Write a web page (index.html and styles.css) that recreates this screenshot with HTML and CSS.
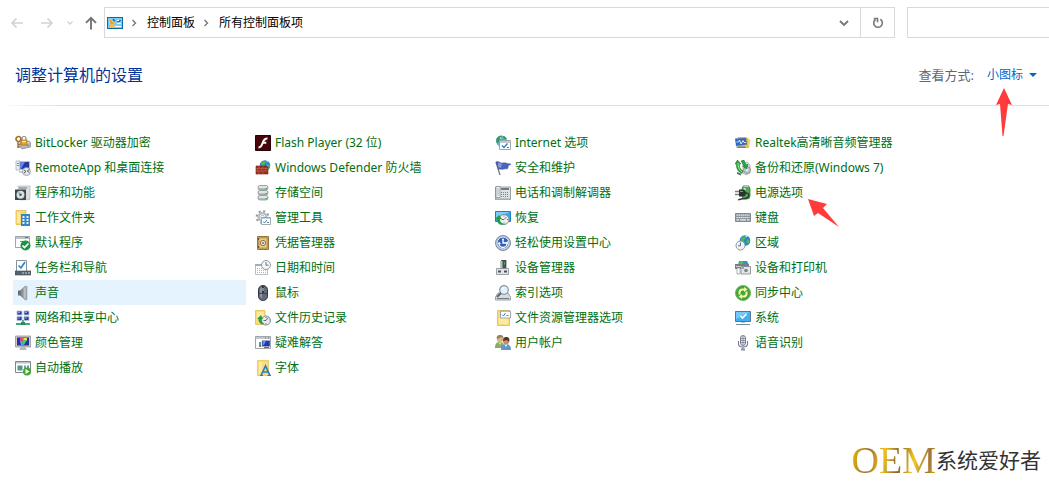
FILE: index.html
```html
<!DOCTYPE html>
<html lang="zh-CN">

<head>
    <meta charset="UTF-8">
    <meta name="viewport" content="width=device-width, initial-scale=1.0">
    <title>所有控制面板项</title>
    <link rel="stylesheet" href="styles.css">
</head>

<body>
    <nav class="toolbar">
        <button type="button" class="nav-btn" aria-label="后退" disabled>
            <svg width="14" height="14" viewBox="0 0 14 14"><path d="M13 7H2M6.500 2.500L2 7l4.500 4.500" fill="none" stroke="#d2d2d2" stroke-width="1.600"/></svg>
        </button>
        <button type="button" class="nav-btn" aria-label="前进" disabled>
            <svg width="14" height="14" viewBox="0 0 14 14"><path d="M1 7h11M7.500 2.500L12 7l-4.500 4.500" fill="none" stroke="#d2d2d2" stroke-width="1.600"/></svg>
        </button>
        <button type="button" class="nav-btn nav-recent" aria-label="最近浏览的位置" disabled>
            <svg width="6" height="6" viewBox="0 0 6 6"><path d="M.5 1.500L3 4l2.500-2.500" fill="none" stroke="#d2d2d2" stroke-width="1.300"/></svg>
        </button>
        <button type="button" class="nav-btn nav-up" aria-label="上移">
            <svg width="14" height="14" viewBox="0 0 14 14"><path d="M7 13.500V2M2 6.800L7 1.800l5 5" fill="none" stroke="#747474" stroke-width="1.900"/></svg>
        </button>
        <div class="address">
            <svg class="icon" viewBox="0 0 16 16"><path fill="#10679d" d="M0 2h16v12H0z"/><path fill="#79cdf7" d="M1 3h14v10H1z"/><circle cx="5" cy="7" r="2.800" fill="#fff"/><path fill="#f0a52a" d="M5 7V4.200A2.800 2.800 0 1 0 7.800 7z"/><path fill="#1978b5" d="M5.500 3.700a2.800 2.800 0 0 1 2.800 2.800H5.500z"/><path stroke="#fff" d="M10 5.500h4M10 8.500h4M7 11.500h7"/><path stroke="#1978b5" d="M12 5.500h2M10 6.500h3"/><path stroke="#f0c65a" d="M3 11.500h5"/></svg>
            <svg class="crumb-arrow" viewBox="0 0 6 8"><path d="M1.500 1l3 3-3 3" fill="none" stroke="#777" stroke-width="1.400"/></svg>
            <a class="crumb" href="#">控制面板</a>
            <svg class="crumb-arrow" viewBox="0 0 6 8"><path d="M1.500 1l3 3-3 3" fill="none" stroke="#777" stroke-width="1.400"/></svg>
            <a class="crumb" href="#">所有控制面板项</a>
            <button type="button" class="history-btn" aria-label="以前的位置">
                <svg width="10" height="8" viewBox="0 0 10 8"><path d="M1 2l4 4 4-4" fill="none" stroke="#777" stroke-width="1.900"/></svg>
            </button>
            <button type="button" class="refresh-btn" aria-label="刷新">
                <svg width="12" height="12" viewBox="0 0 12 12"><path d="M8.300 2.300A4.300 4.300 0 1 1 3.500 2.500M1.800 1.500h3.700v3.700" fill="none" stroke="#777" stroke-width="1.600"/></svg>
            </button>
        </div>
        <input type="search" class="search" aria-label="搜索控制面板">
    </nav>

    <header class="heading">
        <h1>调整计算机的设置</h1>
        <div class="view-by">
            <label for="view">查看方式:</label>
            <select id="view">
                <option>类别</option>
                <option>大图标</option>
                <option selected>小图标</option>
            </select>
            <svg class="caret" viewBox="0 0 8 4"><path fill="#0066cc" d="M0 0h8L4 4z"/></svg>
            <svg class="arrow-up" viewBox="0 0 18 48"><path fill="#ff3b3b" d="M9 0l8 17-4-1-4.500 32h-1L5 16l-4 1z"/></svg>
        </div>
    </header>

    <main>
        <ul class="items">
            <li><a href="#">
                <svg class="icon" viewBox="0 0 16 16"><path fill="#b4b9be" stroke="#737a80" stroke-width=".6" d="M5 7l9-1 1.500 1.500V12L7 14l-2-2z"/><path fill="#e3e6e8" d="M6 8l8-1 .8 1L7 9.500z"/><circle cx="13" cy="10.500" r=".8" fill="#35a73b"/><circle cx="3.500" cy="4" r="2.500" fill="none" stroke="#a3752c" stroke-width="1.700"/><path stroke="#a3752c" stroke-width="1.500" d="M3 6v7M3 9.500h2M3 12h2"/><path d="M7 5V3.500a2 2 0 0 1 4 0V5" fill="none" stroke="#888" stroke-width="1.200"/><path fill="#e1aa37" stroke="#99651c" stroke-width=".6" d="M6 5h6v5H6z"/><path fill="#fff0a6" d="M7 6h4v1H7z"/></svg>
                <span>BitLocker 驱动器加密</span></a></li>
            <li><a href="#">
                <svg class="icon" viewBox="0 0 16 16"><path fill="#470508" stroke="#270305" d="M.5.500h15v15H.5z"/><path d="M12.500 3.500C8.500 3.300 8 7 7 9.500c-.7 1.900-1.700 2.900-3.500 2.900M7.800 7.700h3.500" fill="none" stroke="#fff" stroke-width="2"/></svg>
                <span>Flash Player (32 位)</span></a></li>
            <li><a href="#">
                <svg class="icon" viewBox="0 0 16 16"><circle cx="6.500" cy="6" r="5.500" fill="#53aee2"/><path fill="#3c9b43" d="M2 3c2-2.500 4-2.500 5-2l-1 3-2 1v2L2 8C.8 6 1 4.500 2 3zM8 1c2 0 3.500 2 3.800 3L9 4z"/><path fill="#d9f2fc" d="M5 2l2 1-2 1z"/><path fill="#fff" stroke="#8c949b" stroke-width=".8" d="M4.500 5.500h11v9h-11z"/><path fill="#c3cbd0" d="M5 6h10v2H5z"/><path d="M7 10.500l2 2 3.500-4" fill="none" stroke="#287dc5" stroke-width="1.300"/><path stroke="#777" d="M12 12.500h2"/></svg>
                <span>Internet 选项</span></a></li>
            <li><a href="#">
                <svg class="icon" viewBox="0 0 16 16"><path fill="#e9b53c" d="M3 2h8l4 3-1 8-11-1z"/><path fill="#3567bd" d="M0 3.500L11 3l1 6.500-11 1.500z"/><path d="M1.500 7h2l1-2 1.500 4L8 5.500 9 7.500h2" fill="none" stroke="#dcf3ff" stroke-width=".9"/><path fill="#5c82bf" d="M1 11.500h10v1.500H2z"/><ellipse cx="12" cy="11.500" rx="1.800" ry="1.300" fill="#eac254"/><path d="M13.500 11V4l2 2.500" fill="none" stroke="#f6d66d" stroke-width="1.200"/></svg>
                <span>Realtek高清晰音频管理器</span></a></li>

            <li><a href="#">
                <svg class="icon" viewBox="0 0 16 16"><path fill="#eef1f5" stroke="#a8adb8" stroke-width=".8" d="M1 1h4v9H1z"/><path stroke="#888" d="M2 3.500h2M2 5.500h2"/><path fill="#2738a2" stroke="#bdc3cd" d="M4.500 1.500h10v8h-10z"/><path fill="#6685dc" d="M5 2h5L6 9H5z"/><path fill="#c7cdd3" d="M4 11h6v2H4z"/><circle cx="11.500" cy="11.500" r="4" fill="#e6eaed" stroke="#81888e" stroke-width=".7"/><path d="M9 10l2 1.500L9 13m5.300-3.500l-2 1.500 2 1.500" fill="none" stroke="#46555f"/></svg>
                <span>RemoteApp 和桌面连接</span></a></li>
            <li><a href="#">
                <svg class="icon" viewBox="0 0 16 16"><circle cx="10" cy="5.500" r="5.300" fill="#2587d2"/><path fill="#55b654" d="M8 1l3 1-1 2-3 2-1-3zm4 3l3 1-1 4-3-1z"/><path fill="#c5e8fa" d="M11 0l2 1.500-1 1z"/><path fill="#9c3024" stroke="#752016" stroke-width=".6" d="M1 6h10l2 1v7H1z"/><path stroke="#c5705c" stroke-width=".5" d="M1 8.500h12M1 11h12M4 6v2.500m4-2.500v2.500M2.500 8.500V11m4-2.500V11m4-2.500V11M4 11v3m4-3v3"/></svg>
                <span>Windows Defender 防火墙</span></a></li>
            <li><a href="#">
                <svg class="icon" viewBox="0 0 16 16"><path stroke="#77777f" stroke-width="1.300" d="M1 2l4 13"/><path fill="#4d63ba" stroke="#3448a0" stroke-width=".5" d="M1 2c3-1.500 4 2 7 1 2-1 4 1 8 1-2 1-3 2-3 3.500 0 2-2 1-4 1.500C6 9.800 6 9 3.500 9z"/><path fill="#8396df" d="M3 3c2-1 3 1 4 1L6 8 3 7z"/></svg>
                <span>安全和维护</span></a></li>
            <li><a href="#">
                <svg class="icon" viewBox="0 0 16 16"><path fill="#e1e5e9" stroke="#8e959b" stroke-width=".6" d="M8 4l4-2 3 3v8l-4 2-3-2z"/><circle cx="12" cy="10" r="3.500" fill="#c0c6cc" stroke="#767e85" stroke-width=".7"/><circle cx="12" cy="10" r="1" fill="#fff"/><path fill="#27a63c" stroke="#176c25" stroke-width=".5" d="M0 4l2.500-4L6 4H4.500c-.5 3 .5 5 3.500 7l-1 2.500C3 12 1 8 1.500 4zM6 1l3-1 2 5 2-1-1.500 5L7.500 6H9z"/><path d="M3 3c0 4 1 7 4 9" fill="none" stroke="#9fee8a"/><path fill="#666e73" d="M2 12l4 1.500v2L2 14z"/></svg>
                <span>备份和还原(Windows 7)</span></a></li>

            <li><a href="#">
                <svg class="icon" viewBox="0 0 16 16"><path fill="#dbdfe2" stroke="#a8adb0" stroke-width=".6" d="M3 1h12v13.500L5 15z"/><path fill="#a5abb0" d="M4 2h8v2H4z"/><path fill="#3f474c" d="M0 4.500h11V15H0z"/><circle cx="5.500" cy="9.700" r="4" fill="#d9dfe3"/><path fill="#98bdcf" d="M5.500 9.700l-3.300-2 2.300-1.600z"/><circle cx="5.500" cy="9.700" r="1.200" fill="#444d52"/></svg>
                <span>程序和功能</span></a></li>
            <li><a href="#">
                <svg class="icon" viewBox="0 0 16 16"><g fill="#b9bec2" stroke="#84898d" stroke-width=".7"><rect x="3" y=".5" width="10" height="4.500" rx="2"/><rect x="3" y="5.500" width="10" height="4.500" rx="2"/><rect x="3" y="10.500" width="10" height="4.500" rx="2"/></g><path stroke="#eef0f1" stroke-width="1.300" d="M4 2h8m-8 5h8m-8 5h8"/><path stroke="#38b64a" stroke-width="1.200" d="M10.500 3.700h1.500m-1.500 5h1.500m-1.500 5h1.500"/></svg>
                <span>存储空间</span></a></li>
            <li><a href="#">
                <svg class="icon" viewBox="0 0 16 16"><path fill="#dce2e6" stroke="#838d94" stroke-width=".8" d="M.5 2h15v12H.5z"/><path fill="#f6f8f9" stroke="#7b858b" stroke-width=".7" d="M1 1.500h4v11H1z"/><path fill="#6f7b82" d="M6 3h8v2H6z"/><path stroke="#76838b" stroke-dasharray="1 1" d="M6 7.500h8m-8 2h8m-8 2h8"/><path stroke="#a5adb2" d="M0 14.500h16M3 3v8"/></svg>
                <span>电话和调制解调器</span></a></li>
            <li class="marked"><a href="#">
                <svg class="icon" viewBox="0 0 16 16"><rect x="7" y="1" width="8" height="13" rx="3" fill="#4bae4b" stroke="#2e742f" stroke-width=".8"/><path fill="#c9f3c0" d="M8.500 3h2v4h-2z"/><path fill="#d1d5d2" stroke="#8b928c" stroke-width=".5" d="M8.500.300h5V2h-5z"/><path fill="#2c3334" d="M4 4.500h4c4 0 4 7 0 7H4z"/><path stroke="#777f81" stroke-width="1.300" d="M0 6.500h4M0 9.500h4"/><path d="M10 8c6-.5 4 5 0 5.500-4 .5-4 0-7 1.500" fill="none" stroke="#333" stroke-width="1.300"/><path stroke="#8b9293" d="M5 6.500h3"/></svg>
                <span>电源选项</span></a>
                <svg class="arrow-left" viewBox="0 0 32 30"><path fill="#ff3b3b" d="M0 0l19 5-4 4 16 19-21-14-4 3z"/></svg></li>

            <li><a href="#">
                <svg class="icon" viewBox="0 0 16 16"><path fill="#f7d779" stroke="#e6bb49" stroke-width=".8" d="M1 .5h10v14H1z"/><path fill="#ffe9a2" d="M2 2h3v11H2z"/><path fill="#3487c7" d="M6 4h9v12H6z"/><path fill="#e3f3fc" d="M7.500 6h2v2h-2zm4 0h2v2h-2zm-4 3h2v2h-2zm4 0h2v2h-2zm-4 3h2v2h-2zm4 0h2v2h-2z"/></svg>
                <span>工作文件夹</span></a></li>
            <li><a href="#">
                <svg class="icon" viewBox="0 0 16 16"><circle cx="7.500" cy="7" r="5.800" fill="none" stroke="#8d969d" stroke-width="2.200" stroke-dasharray="2 2.555"/><circle cx="7.500" cy="7" r="3.900" fill="#fff" stroke="#b4bcc1" stroke-width="2.200"/><circle cx="7.500" cy="7" r="1.800" fill="#fff" stroke="#87919a" stroke-width=".6"/><path fill="#fff" stroke="#8c959c" stroke-width=".8" d="M6.500 7.500h9v7h-9z"/><path fill="#c5cdd3" d="M7 8h8v1H7z"/><path d="M8 11.500l1.500 1.500 2.500-3" fill="none" stroke="#2784cf"/><path stroke="#777" d="M12 12.500h2"/></svg>
                <span>管理工具</span></a></li>
            <li><a href="#">
                <svg class="icon" viewBox="0 0 16 16"><path fill="#36a6ed" stroke="#1880c3" d="M.5 1.500h15v10H.5z"/><path fill="#79cffa" d="M1 2h14L1 8z"/><circle cx="9" cy="9.500" r="5" fill="#edf1ef" stroke="#7d8787"/><path d="M9 9.500L11.500 7M9 9.500H6.500M9 5.500v1m4 3h-1m-3 3v1" fill="none" stroke="#616b6b"/><path fill="#239c43" d="M0 9l4-4 3 4H5c0 3 1 4 4 5-3 2-7 0-7-5z"/></svg>
                <span>恢复</span></a></li>
            <li><a href="#">
                <svg class="icon" viewBox="0 0 16 16"><path fill="#8b959c" stroke="#818b92" d="M.5 3.500h15v8H.5z"/><path stroke="#eef1f3" stroke-width="1.200" stroke-dasharray="1.400 .6" d="M1.500 5.200h13m-13 2.300h13"/><path stroke="#eef1f3" stroke-width="1.200" d="M1.500 9.800H4m1 0h6m1 0h2.500"/></svg>
                <span>键盘</span></a></li>

            <li><a href="#">
                <svg class="icon" viewBox="0 0 16 16"><path fill="#fff" stroke="#848d94" stroke-width=".8" d="M.5 1.500h14v11H.5z"/><path fill="#bdc5cb" d="M1 2h13v2H1z"/><path stroke="#687279" d="M10 2.500h3"/><path fill="#459cd9" d="M5 6h3v1H5z"/><circle cx="10.500" cy="10.500" r="5" fill="#1c9345"/><path d="M7.500 10.500l2 2 4-4" fill="none" stroke="#fff" stroke-width="1.700"/></svg>
                <span>默认程序</span></a></li>
            <li><a href="#">
                <svg class="icon" viewBox="0 0 16 16"><path fill="#c9a557" stroke="#98773a" d="M2.500 1.500h11v13h-11z"/><path fill="#ebd08c" stroke="#a9854a" stroke-width=".7" d="M4 3h8v10H4z"/><circle cx="8" cy="8" r="2.700" fill="#e8e1cb" stroke="#8f794f"/><circle cx="8" cy="8" r="1" fill="#7e745e"/><path stroke="#704f1b" d="M3.500 3v2m0 6v2"/></svg>
                <span>凭据管理器</span></a></li>
            <li><a href="#">
                <svg class="icon" viewBox="0 0 16 16"><circle cx="8" cy="8" r="7.500" fill="#b4bcc6" stroke="#848c98"/><circle cx="8" cy="8" r="5.900" fill="#2f60bd" stroke="#eef4ff" stroke-width=".8"/><path d="M4 8.500a4 4 0 0 0 8 0M8 4v4h3" fill="none" stroke="#fff" stroke-width="1.400"/><path fill="#fff" d="M3 9l1-2.500L6 9zm7-1l3-2-.3 3.500zM7 5l1-2 1 2z"/></svg>
                <span>轻松使用设置中心</span></a></li>
            <li><a href="#">
                <svg class="icon" viewBox="0 0 16 16"><circle cx="10" cy="5.500" r="5.300" fill="#2584ce"/><path fill="#54b453" d="M6 3l3-2 2 2-2 2v2H6zm6 1l3 1-2 4-2-2z"/><path fill="#bfe8fa" d="M10 .5l3 1-2 1z"/><circle cx="5.500" cy="10.500" r="4.500" fill="#f1f4f6" stroke="#8b969d"/><path d="M5.500 7.500v3.200H3" fill="none" stroke="#68747b"/></svg>
                <span>区域</span></a></li>

            <li><a href="#">
                <svg class="icon" viewBox="0 0 16 16"><path fill="#fff" stroke="#8a9299" d="M1.500.5h10v11h-10z"/><path d="M3.500 5.500L6 8l4-6" fill="none" stroke="#2688d7" stroke-width="1.700"/><path fill="#58636d" stroke="#414c56" stroke-width=".6" d="M0 11h16v4H0z"/><path fill="#ccd4d9" d="M7 12.500h2v1H7zm3 0h2v1h-2zm3 0h2v1h-2z"/></svg>
                <span>任务栏和导航</span></a></li>
            <li><a href="#">
                <svg class="icon" viewBox="0 0 16 16"><path fill="#fff" stroke="#a2adb3" stroke-width=".8" d="M.5 4.500h12v10H.5z"/><path fill="#a2afb7" d="M0 4h12v2H0z"/><path stroke="#8fc3d4" stroke-dasharray="1 1" d="M2 8.500h9m-9 2h9m-9 2h9"/><circle cx="11" cy="5" r="4.500" fill="#f5f7f7" stroke="#8d999f"/><path d="M11 2v3.200h2.500" fill="none" stroke="#66757b"/></svg>
                <span>日期和时间</span></a></li>
            <li><a href="#">
                <svg class="icon" viewBox="0 0 16 16"><path fill="#4a5257" stroke="#3d454a" stroke-width=".7" d="M6.500 0h4.500v9H6.500z"/><path fill="#bcc3c7" d="M5 1h2.500v7H5z"/><path fill="#42d14c" d="M9 2.500h1v2H9z"/><path fill="#e2e5e7" stroke="#858b8f" stroke-width=".8" d="M1.500 8.500h12v6h-12z"/><path fill="#4b5357" d="M3 10.500h3v2H3zm6 0h3v2H9z"/></svg>
                <span>设备管理器</span></a></li>
            <li><a href="#">
                <svg class="icon" viewBox="0 0 16 16"><path fill="#2998d2" d="M4 1h8l2 4H3z"/><path fill="#58b96a" d="M5 1h3v3H4z"/><path fill="#777f84" d="M0 4h14v5H0z"/><path stroke="#d2d7d9" d="M1 6.500h8"/><path fill="#fff" stroke="#888f93" stroke-width=".7" d="M2 8h3v6H2z"/><path fill="#e4e7e9" stroke="#7e878c" stroke-width=".8" d="M6 6.500h9.500v7.500H6z"/><circle cx="11" cy="10.500" r="2.300" fill="#7d888e" stroke="#fff" stroke-width=".7"/><path fill="#535e64" d="M7 7.500h2v1H7z"/></svg>
                <span>设备和打印机</span></a></li>

            <li><a href="#" class="hover">
                <svg class="icon" viewBox="0 0 16 16"><path fill="#686f74" d="M3 5.500h3v5H3z"/><path fill="#8a9196" stroke="#697176" stroke-width=".6" d="M5.500 5.500l5-4.500v14l-5-4.500z"/><path fill="#bcc2c6" d="M8.500 3.500L11 1v14l-2.500-2.500z"/><path stroke="#9aa4aa" stroke-width="1.600" d="M11.500 1v14"/></svg>
                <span>声音</span></a></li>
            <li><a href="#">
                <svg class="icon" viewBox="0 0 16 16"><rect x="3.500" y=".5" width="9" height="15" rx="4.300" fill="#626b76" stroke="#303741"/><path fill="#87929f" d="M5 5c0-2 1-3 2-3v6H5z"/><path fill="#303a48" d="M7 1h2v7H7z"/><path stroke="#cad5df" d="M8 3v3"/><path d="M4 8.500h8" fill="none" stroke="#3b4552"/><path fill="#909aa5" d="M5 9h2v4c-1 0-2-1-2-4z"/></svg>
                <span>鼠标</span></a></li>
            <li><a href="#">
                <svg class="icon" viewBox="0 0 16 16"><path fill="#d8dcdf" stroke="#848d94" stroke-width=".8" d="M3 8h10l2.500 4v3H.5v-3z"/><path stroke="#737c83" d="M2 13.500h12"/><circle cx="9" cy="5" r="4.300" fill="#e2f2fb" stroke="#8796a2" stroke-width="1.200"/><path fill="#fff" d="M7 3l3-1-2 3z"/><path stroke="#5a656d" stroke-width="1.800" d="M6 8l-4 4"/></svg>
                <span>索引选项</span></a></li>
            <li><a href="#">
                <svg class="icon" viewBox="0 0 16 16"><circle cx="8" cy="8" r="7.500" fill="#43a536" stroke="#6bb95f"/><path d="M4.500 9.500V7a3 3 0 0 1 3-2.500H9M11.500 6.500V9a3 3 0 0 1-3 2.500H7" fill="none" stroke="#fff4ac" stroke-width="2"/><path fill="#fff4ac" d="M9 2l3.500 2.500L9 7zm-2 7v5l-3.500-2.500z"/></svg>
                <span>同步中心</span></a></li>

            <li><a href="#">
                <svg class="icon" viewBox="0 0 16 16"><g fill="#293c9b" stroke="#bbc3dc" stroke-width=".9"><path d="M2 1h5v4H2zM9 1h5v4H9zM2 6.500h5v4H2zM9 6.500h5v4H9z"/></g><path fill="#849df0" d="M3 2h2v1H3zm7 0h2v1h-2zM3 7.500h2v1H3zm7 0h2v1h-2z"/><path stroke="#39a777" stroke-width="1.700" d="M8 10v4"/><path fill="#37ad7b" d="M1 13h14v2H1z"/><path fill="#2e895f" d="M6 12h4v3H6z"/></svg>
                <span>网络和共享中心</span></a></li>
            <li><a href="#">
                <svg class="icon" viewBox="0 0 16 16"><path fill="#f8db7c" stroke="#e1bc54" stroke-width=".8" d="M.5.500H10v14H.5z"/><path fill="#ffe9a0" d="M2 2h7v8H2z"/><circle cx="11" cy="10.500" r="4.500" fill="#e8ecee" stroke="#818b91"/><path d="M11 10.500l2-3m-2 3H8.500" fill="none" stroke="#626e75"/><path stroke="#828d94" d="M11 7v1m3 2h1m-4 3v1"/><path fill="#249c42" d="M2 9l4-4 2 4H6.500c0 3 1 4 3 5-3 1-6-1-6-5z"/></svg>
                <span>文件历史记录</span></a></li>
            <li><a href="#">
                <svg class="icon" viewBox="0 0 16 16"><path fill="#f8db7c" stroke="#dfb94f" stroke-width=".8" d="M2.500.5h12v15h-12z"/><path fill="#ffe9a0" d="M4 8h9v6H4z"/><path fill="#fff" stroke="#84929c" stroke-width=".8" d="M5.500 1h10v7h-10z"/><path fill="#b3c0c8" d="M6 1h9v1H6z"/><path d="M7 4.500L8.500 6l2-3" fill="none" stroke="#2885d4"/><path stroke="#6e7b84" d="M11.500 5.500h2"/></svg>
                <span>文件资源管理器选项</span></a></li>
            <li><a href="#">
                <svg class="icon" viewBox="0 0 16 16"><path fill="#42aff0" stroke="#527898" d="M.5 1.500h15v10H.5z"/><path fill="#74c9f8" d="M1 2h14L1 9z"/><path d="M5.500 6l2 2 4-4" fill="none" stroke="#fff" stroke-width="1.700"/><path fill="#b1c1cd" d="M6 12h4v1H6z"/><path stroke="#748b9d" d="M1 14.500h14"/></svg>
                <span>系统</span></a></li>

            <li><a href="#">
                <svg class="icon" viewBox="0 0 16 16"><path fill="#c9cbd0" stroke="#858791" stroke-width=".7" d="M.5 1h15v11H.5z"/><path fill="#29329b" d="M2 2.500h12v8H2z"/><path fill="#d940a6" d="M5 3h3v5H5z"/><path fill="#f1df46" d="M8 3h4v3H8z"/><path fill="#42c877" d="M8 5h4l-3 5-2-2z"/><path fill="#31baf1" d="M5 5l4 5H6z"/><path fill="#f46242" d="M7 3h2l-1 3z"/><path fill="#b6b8bf" d="M6 12h4l2 3H4z"/></svg>
                <span>颜色管理</span></a></li>
            <li><a href="#">
                <svg class="icon" viewBox="0 0 16 16"><path fill="#fff" stroke="#858f98" stroke-width=".8" d="M.5 1.500h15v12H.5z"/><path fill="#c2c8cd" d="M1 2h14v2H1z"/><path stroke="#5d6973" d="M10 3h1m2 0h1"/><path fill="#1f35b2" stroke="#a5adbd" stroke-width=".7" d="M7 5.500h8v6H7z"/><path fill="#6d85ec" d="M8 6h3l-2 4H8z"/><path fill="#3da88a" d="M4 7h2v5H4z"/><path fill="#616d77" d="M9 12h5v1H9z"/><path fill="#ae4a58" d="M5 10h1v2H5z"/></svg>
                <span>疑难解答</span></a></li>
            <li><a href="#">
                <svg class="icon" viewBox="0 0 16 16"><circle cx="5" cy="4" r="3.200" fill="#dcb67e"/><path fill="#94835a" d="M2 4c-1-3 1-4 3-4 3 0 4 2 3 4L7 2z"/><path fill="#8cab64" d="M0 13c0-5 2-6 5-6s4 2 4 6z"/><path fill="#dce6b3" d="M3.500 7.500h3L5 10z"/><circle cx="11" cy="6.500" r="3" fill="#d2895d"/><path fill="#513329" d="M8 6c0-3 1-4 3-4 3 0 4 2 3 5l-2-2z"/><path fill="#6196c8" d="M6 15c0-4 2-6 5-6s5 2 5 6z"/><path fill="#eff6fc" d="M9.500 9.500h3L11 12z"/></svg>
                <span>用户帐户</span></a></li>
            <li><a href="#">
                <svg class="icon" viewBox="0 0 16 16"><rect x="5.500" y=".5" width="5" height="10" rx="2.500" fill="#e7e9ef" stroke="#777c92"/><path stroke="#7a8096" stroke-width=".8" d="M5.500 3.500h5m-5 2h5m-5 2h5M8 1v9"/><path d="M3.500 6v3c0 4 9 4 9 0V6M8 12v3" fill="none" stroke="#777c92" stroke-width="1.100"/><path fill="#8a90a4" d="M6 13.500h4v2H6z"/></svg>
                <span>语音识别</span></a></li>

            <li><a href="#">
                <svg class="icon" viewBox="0 0 16 16"><path fill="#fff" stroke="#7d8990" d="M.5 1.500h15v11H.5z"/><path fill="#bac4ca" d="M1 2h14v1.500H1z"/><path fill="#519885" d="M2.500 5.500h5v5h-5z"/><path fill="#7f9ba3" d="M9 5.500h2v4H9z"/><path fill="#679c92" d="M12 5.500h2v3h-2z"/><circle cx="12" cy="11.500" r="4" fill="#43a536"/><path fill="#fff" d="M10.500 9l4 2.500-4 2.500z"/></svg>
                <span>自动播放</span></a></li>
            <li><a href="#">
                <svg class="icon" viewBox="0 0 16 16"><path fill="#f8db7c" stroke="#e6c35e" stroke-width=".8" d="M2.500.5h11v15h-11z"/><path fill="#ffe9a0" d="M4 2h3v12H4z"/><path d="M6 15.500L10.500 6 15 15.500M7.500 12h6" fill="none" stroke="#2580c2" stroke-width="1.700"/><path stroke="#2580c2" d="M5 15.500h3m4.500 0H16"/></svg>
                <span>字体</span></a></li>
        </ul>
    </main>

    <footer class="brand"><span class="brand-oem">OEM</span><span>系统爱好者</span></footer>
</body>

</html>
```
FILE: styles.css
```css
* {
    box-sizing: border-box;
}

body {
    margin: 0;
    min-height: 100vh;
    display: flex;
    flex-direction: column;
    background-color: #ffffff;
    font-family: "Noto Sans", "Noto Sans CJK SC", sans-serif;
    font-size: 12px;
    line-height: 18px;
    overflow-x: hidden;
}

button {
    display: flex;
    align-items: center;
    justify-content: center;
    padding: 0;
    border: none;
    background: none;
}

a {
    text-decoration: none;
}

svg {
    flex: none;
}

.icon {
    width: 16px;
    height: 16px;
}

/* Top bar */
.toolbar {
    display: flex;
    height: 31px;
    margin-top: 7px;
    padding-left: 2px;
}

.nav-btn {
    width: 30px;
}

.nav-recent {
    width: 16px;
}

.nav-up {
    width: 26px;
}

.address {
    flex: 1;
    display: flex;
    align-items: center;
    border: 1px solid #d9d9d9;
    padding-left: 2px;
}

.crumb-arrow {
    width: 6px;
    height: 8px;
    margin: 0 10px 0 8px;
}

.crumb {
    color: #000000;
}

.history-btn {
    width: 32px;
    height: 100%;
    margin-left: auto;
}

.refresh-btn {
    width: 34px;
    height: 100%;
    border-left: 1px solid #d9d9d9;
}

.search {
    width: 142px;
    margin-left: 12px;
    border: 1px solid #d9d9d9;
    border-right: none;
    border-radius: 0;
    outline: none;
}

/* Heading row */
.heading {
    display: flex;
    align-items: center;
    justify-content: space-between;
    height: 68px;
    padding: 6px 12px 0 15px;
    border-bottom: 1px solid;
    border-image: linear-gradient(to right, #ffffff, #d8e2ee 60px) 1;
}

h1 {
    margin: 0;
    color: #003399;
    font-size: 16px;
    font-weight: normal;
    line-height: 24px;
}

.view-by {
    position: relative;
    display: flex;
    align-items: center;
}

.view-by label {
    color: #5a6780;
    font-size: 13px;
}

.view-by select {
    appearance: none;
    margin: 0 5px 0 13px;
    padding: 0;
    border: none;
    background: none;
    color: #0066cc;
    font-family: inherit;
    font-size: 12px;
    line-height: 18px;
}

.caret {
    width: 8px;
    height: 4px;
}

.arrow-up {
    position: absolute;
    top: 22px;
    right: 24px;
    width: 18px;
    height: 48px;
}

/* Item list, filled row by row */
.items {
    display: grid;
    grid-template-columns: repeat(auto-fill, 240px);
    margin: 24px 0 0;
    padding: 0 0 0 13px;
    list-style: none;
}

.items li {
    padding-right: 7px;
}

.items a {
    display: flex;
    align-items: center;
    gap: 4px;
    height: 25px;
    padding-left: 2px;
    color: #006e12;
    white-space: nowrap;
}

.items a:hover,
.items a.hover {
    background-color: #e5f3ff;
}

.marked {
    position: relative;
}

.arrow-left {
    position: absolute;
    top: 19px;
    left: 75px;
    width: 32px;
    height: 30px;
}

/* Brand in the bottom corner */
.brand {
    display: flex;
    align-items: center;
    justify-content: flex-end;
    margin-top: auto;
    padding: 0 8px 8px 0;
    color: #333333;
    font-size: 21px;
    line-height: 44px;
}

.brand-oem {
    background: linear-gradient(100deg, #f4c800, #9a6a35 20%, #f0c418 38%, #8d6032 55%, #f2cb22 72%, #a0703a 88%, #e6b800);
    -webkit-background-clip: text;
    background-clip: text;
    color: transparent;
    font-family: "Liberation Serif", serif;
    font-size: 38px;
}
```
